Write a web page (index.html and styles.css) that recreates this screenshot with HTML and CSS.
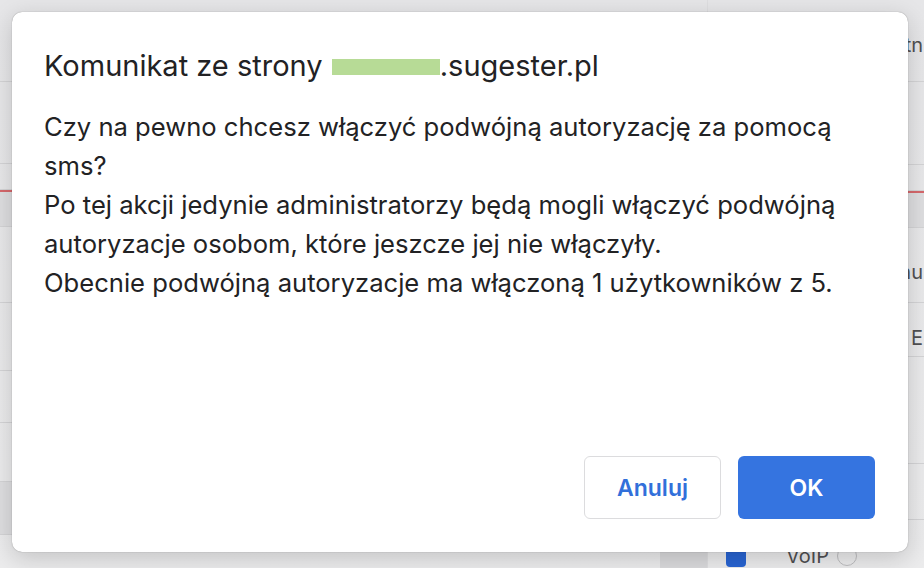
FILE: index.html
```html
<html>
    <head>
        <title>Komunikat</title>
        <meta charset="utf-8">
        <link rel="stylesheet" href="styles.css">
    </head>
    <body>
        <div id="strona">
            <div class="kolumna lewa">
                <div class="wiersz" style="height: 82px"></div>
                <div class="wiersz" style="height: 82px"></div>
                <div class="wiersz" style="height: 26px"></div>
                <div class="wiersz pasek czerwony" style="height: 37px"></div>
                <div class="wiersz" style="height: 76px"></div>
                <div class="wiersz" style="height: 68px"></div>
                <div class="wiersz" style="height: 52px"></div>
                <div class="wiersz" style="height: 59px"></div>
                <div class="wiersz pasek" style="height: 53px"></div>
                <div class="wiersz stopka"></div>
            </div>
            <div class="kolumna srodek">
                <div class="wiersz" style="height: 82px"></div>
                <div class="wiersz" style="height: 82px"></div>
                <div class="wiersz" style="height: 26px"></div>
                <div class="wiersz pasek czerwony" style="height: 37px"></div>
                <div class="wiersz" style="height: 76px"></div>
                <div class="wiersz" style="height: 68px"></div>
                <div class="wiersz" style="height: 52px"></div>
                <div class="wiersz" style="height: 59px"></div>
                <div class="wiersz pasek" style="height: 53px"></div>
                <div class="wiersz stopka ciemna"></div>
            </div>
            <div class="kolumna prawa">
                <div class="wiersz tekst" style="height: 82px; padding-top: 34px">tn</div>
                <div class="wiersz" style="height: 83px"></div>
                <div class="wiersz" style="height: 26px"></div>
                <div class="wiersz pasek czerwony" style="height: 37px"></div>
                <div class="wiersz tekst" style="height: 75px; padding-top: 33px">nu</div>
                <div class="wiersz tekst" style="height: 54px; padding-top: 24px">E</div>
                <div class="wiersz" style="height: 107px"></div>
                <div class="wiersz" style="height: 56px"></div>
                <div class="wiersz voip">
                    <span class="check"></span>
                    <span>VoIP</span>
                    <span class="radio"></span>
                </div>
            </div>
        </div>

        <div id="okno">
            <div class="tytul">Komunikat ze strony <span class="zamazane" aria-label="ukryta nazwa"></span>.sugester.pl</div>
            <div class="tresc">
                Czy na pewno chcesz włączyć podwójną autoryzację za pomocą sms?<br>
                Po tej akcji jedynie administratorzy będą mogli włączyć podwójną autoryzacje osobom, które jeszcze jej nie włączyły.<br>
                Obecnie podwójną autoryzacje ma włączoną 1 użytkowników z 5.
            </div>
            <div class="przyciski">
                <button class="anuluj">Anuluj</button>
                <button class="ok">OK</button>
            </div>
        </div>
    </body>
</html>
```

FILE: styles.css
```css
body{
    margin: 0;
    width: 924px;
    height: 568px;
    overflow: hidden;
    font-family: Inter, "Noto Sans", sans-serif;
    background-color: rgb(232, 232, 233);
}
#strona{
    display: grid;
    grid-template-columns: 660px 47px 217px;
    height: 568px;
    background: linear-gradient(rgb(230, 230, 232), rgb(236, 236, 237));
}
.kolumna{
    display: flex;
    flex-direction: column;
}
.wiersz{
    border-bottom: 1px solid rgb(212, 212, 214);
    box-sizing: border-box;
    flex-shrink: 0;
}
.pasek{
    background-color: rgb(222, 222, 224);
}
.czerwony{
    border-top: 2px solid rgb(214, 104, 108);
}
.stopka{
    flex: 1;
    border-bottom: none;
}
.ciemna{
    background-color: rgb(218, 218, 220);
}
.prawa{
    border-left: 1px solid rgb(222, 222, 224);
}
.tekst{
    text-align: right;
    padding-right: 1px;
    font-family: Inter, sans-serif;
    font-size: 20px;
    line-height: 22px;
    color: rgb(80, 80, 82);
}
.voip{
    flex: 1;
    border-bottom: none;
    display: flex;
    align-items: flex-start;
    padding-top: 24px;
    padding-left: 18px;
    font-family: Inter, sans-serif;
    font-size: 20px;
    color: rgb(80, 80, 82);
}
.check{
    width: 20px;
    height: 20px;
    border-radius: 4px;
    background-color: rgb(40, 100, 210);
    margin-top: 3px;
    margin-right: 40px;
}
.radio{
    width: 18px;
    height: 18px;
    border: 1px solid rgb(190, 190, 192);
    border-radius: 50%;
    margin-left: 8px;
    margin-top: 2px;
}

#okno{
    position: absolute;
    left: 12px;
    top: 12px;
    width: 896px;
    height: 540px;
    box-sizing: border-box;
    padding: 36px 33px 33px 32px;
    background-color: white;
    border-radius: 10px;
    box-shadow: 0 0 1px rgba(0, 0, 0, 0.45), 0 6px 24px rgba(0, 0, 0, 0.18);
    display: flex;
    flex-direction: column;
    color: rgb(34, 34, 36);
}
.tytul{
    font-size: 29px;
    line-height: 36px;
}
/* zamazana nazwa konta */
.zamazane{
    display: inline-block;
    width: 108px;
    height: 16px;
    margin-left: 1px;
    vertical-align: 1px;
    background-color: rgb(183, 219, 150);
}
.tresc{
    flex: 1;
    margin-top: 23px;
    font-size: 25.6px;
    line-height: 39px;
}
.przyciski{
    display: flex;
    justify-content: flex-end;
    gap: 17px;
}
button{
    width: 137px;
    height: 63px;
    border-radius: 6px;
    font-family: Inter, "Noto Sans", sans-serif;
    font-size: 23px;
    font-weight: 600;
}
.anuluj{
    background-color: white;
    border: 1px solid rgb(220, 220, 222);
    color: rgb(50, 112, 218);
}
.ok{
    background-color: rgb(53, 116, 224);
    border: none;
    color: white;
}
```
